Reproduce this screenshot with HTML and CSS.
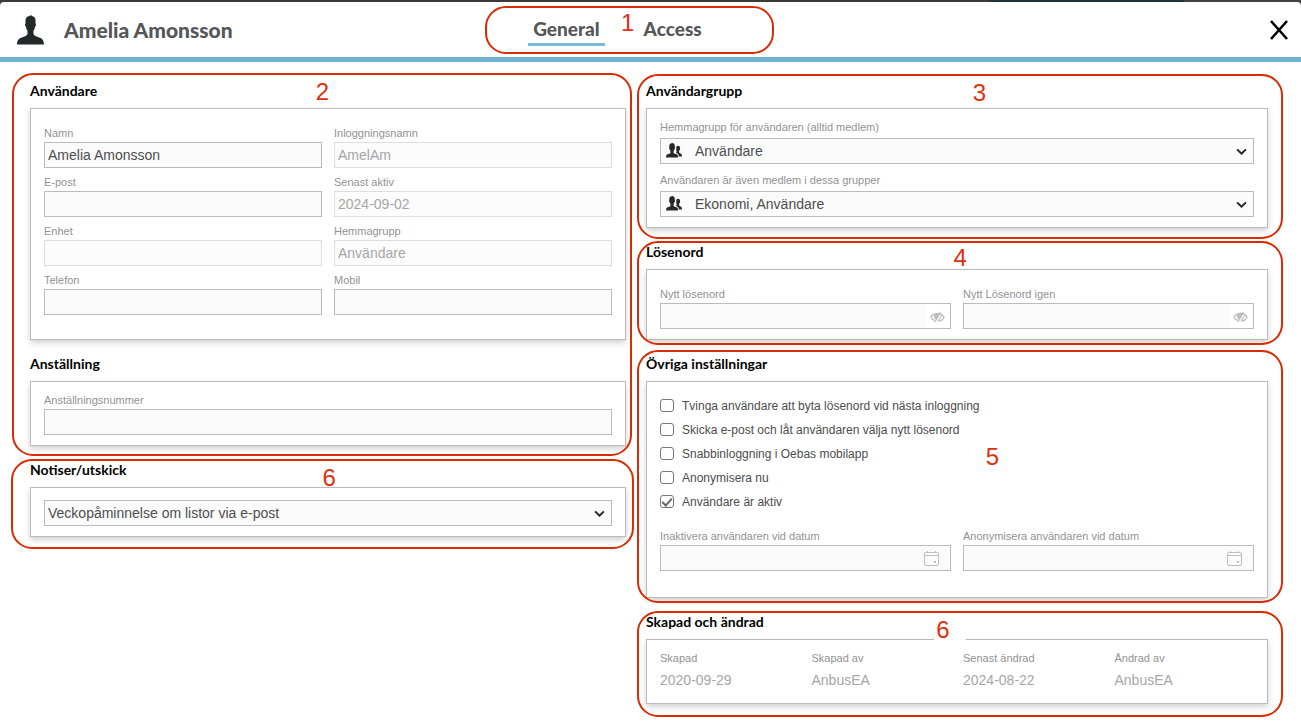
FILE: index.html
```html
<!DOCTYPE html>
<html lang="sv">
<head>
<meta charset="utf-8">
<meta name="viewport" content="width=device-width, initial-scale=1">
<title>Amelia Amonsson</title>
<link rel="stylesheet" href="styles.css">
</head>
<body>
<svg class="symbols" aria-hidden="true">
  <symbol id="person" viewBox="0 0 27 30">
    <path d="M12.500 1 14 0l1 1c2.600.500 3.900 2.500 3.500 5.500v2.300c.9.300.5 2.500-.5 3-.2 1.800-.7 2.900-1.500 4v3.300c.6 1.700 2.400 2.400 5 3.200 3.500 1 5.200 2.300 5.500 7.200H0c.3-4.900 2-6.200 5.500-7.200 2.600-.8 4.400-1.500 5-3.200v-3.300c-.8-1.100-1.300-2.200-1.500-4-1-.5-1.400-2.700-.5-3V6.500C8.200 3.400 9.500 1.300 12.500 1z"/>
  </symbol>
  <symbol id="people" viewBox="0 0 16 15">
    <path d="M5 .4 6 0c2 0 3 1.300 2.800 3.400v1c.5.200.3 1.300-.3 1.600-.1.800-.4 1.300-.9 1.900v1.500c.2 1 1.100 1.300 2.400 1.700 1.600.5 2.100 1.400 2.100 3.500H0c0-2.100.5-3 2.100-3.500 1.300-.4 2.200-.7 2.400-1.700V7.900c-.5-.6-.8-1.100-.9-1.900-.6-.3-.8-1.400-.3-1.600v-1C3.100 1.800 3.800.7 5 .4z"/>
    <path d="M10.300 4c.3-.8.900-1.200 1.700-1.200 1.600 0 2.200 1 2 2.600.4.200.2 1-.2 1.200-.1.700-.3 1-.7 1.400v1.300c.2.700.7 1 1.500 1.300 1 .3 1.400 1.100 1.400 3h-3.200c-.1-1.800-.6-2.700-2.200-3.300l-.9-.4c.6-.2.900-.5.900-1V8c-.3-.3-.4-.6-.4-1z"/>
  </symbol>
  <symbol id="chevron" viewBox="0 0 10 6">
    <path d="M1 1l4 4 4-4" fill="none" stroke="#222" stroke-width="1.700"/>
  </symbol>
  <symbol id="eye" viewBox="0 0 15 12">
    <path d="M1 6.200C3.500 1.200 11.500 1.200 14 6.200 12.800 8.900 10.500 10 8 10M5 9.600C3.200 9 1.700 7.900 1 6.200" fill="none" stroke="currentColor" stroke-width="1.400"/>
    <path d="M4 4c2-1.500 4.500-1.500 6-1L6.500 9C4.500 8.500 3.500 6 4 4z"/>
    <path d="M10.700.8 5 11.200M11.500 4.500 8.500 9.500" fill="none" stroke="currentColor" stroke-width="1.100"/>
  </symbol>
  <symbol id="calendar" viewBox="0 0 15 15">
    <g fill="none" stroke="currentColor" stroke-width="1"><rect x=".5" y="1.500" width="14" height="13" rx="1.500"/><path d="M1 4.500h13M3.500 0v2M11.500 0v2"/></g>
    <rect x="10" y="10" width="2" height="2"/>
  </symbol>
</svg>

<div class="dialog">
  <header class="header">
    <div class="identity">
      <svg class="identity-icon"><use href="#person"/></svg>
      <h1 class="identity-name">Amelia Amonsson</h1>
    </div>
    <nav class="tabs">
      <button class="tab tab-active" type="button">General</button>
      <button class="tab" type="button">Access</button>
      <div class="mark mark-tabs"><span class="mark-number">1</span></div>
    </nav>
    <button class="close" type="button" aria-label="Stäng">
      <svg class="close-icon" viewBox="0 0 18 20"><path d="M1 1l16 18M17 1L1 19" stroke="#000" stroke-width="2.600"/></svg>
    </button>
  </header>

  <main class="content">
    <div class="column">
      <div class="group">
        <section class="section">
          <h2 class="heading">Användare</h2>
          <div class="card card-user">
            <div class="fields">
              <div class="field"><label class="label" for="namn">Namn</label><input class="input" id="namn" type="text" value="Amelia Amonsson"></div>
              <div class="field"><label class="label" for="login">Inloggningsnamn</label><input class="input" id="login" type="text" value="AmelAm" disabled></div>
              <div class="field"><label class="label" for="epost">E-post</label><input class="input" id="epost" type="text"></div>
              <div class="field"><label class="label" for="aktiv">Senast aktiv</label><input class="input" id="aktiv" type="text" value="2024-09-02" disabled></div>
              <div class="field"><label class="label" for="enhet">Enhet</label><input class="input" id="enhet" type="text" disabled></div>
              <div class="field"><label class="label" for="hemma">Hemmagrupp</label><input class="input" id="hemma" type="text" value="Användare" disabled></div>
              <div class="field"><label class="label" for="telefon">Telefon</label><input class="input" id="telefon" type="text"></div>
              <div class="field"><label class="label" for="mobil">Mobil</label><input class="input" id="mobil" type="text"></div>
            </div>
          </div>
        </section>
        <section class="section">
          <h2 class="heading">Anställning</h2>
          <div class="card">
            <div class="field"><label class="label" for="nummer">Anställningsnummer</label><input class="input" id="nummer" type="text"></div>
          </div>
        </section>
        <div class="mark mark-user"><span class="mark-number">2</span></div>
      </div>

      <div class="group">
        <h2 class="heading" id="notiser">Notiser/utskick</h2>
        <div class="card card-notices">
          <div class="control">
            <select class="input select" aria-labelledby="notiser"><option>Veckopåminnelse om listor via e-post</option></select>
            <svg class="chevron"><use href="#chevron"/></svg>
          </div>
        </div>
        <div class="mark mark-notices"><span class="mark-number">6</span></div>
      </div>
    </div>

    <div class="column">
      <div class="group">
        <h2 class="heading">Användargrupp</h2>
        <div class="card card-groups">
          <div class="field field-select">
            <label class="label" for="hemgrupp">Hemmagrupp för användaren (alltid medlem)</label>
            <div class="control">
              <svg class="people"><use href="#people"/></svg>
              <select class="input select select-icon" id="hemgrupp"><option>Användare</option></select>
              <svg class="chevron"><use href="#chevron"/></svg>
            </div>
          </div>
          <div class="field field-select">
            <label class="label" for="grupper">Användaren är även medlem i dessa grupper</label>
            <div class="control">
              <svg class="people"><use href="#people"/></svg>
              <select class="input select select-icon" id="grupper"><option>Ekonomi, Användare</option></select>
              <svg class="chevron"><use href="#chevron"/></svg>
            </div>
          </div>
        </div>
        <div class="mark mark-groups"><span class="mark-number">3</span></div>
      </div>

      <div class="group">
        <h2 class="heading">Lösenord</h2>
        <div class="card card-password">
          <div class="fields">
            <div class="field"><label class="label" for="losen">Nytt lösenord</label>
              <div class="control"><input class="input" id="losen" type="password"><button class="tool tool-eye" type="button" aria-label="Visa lösenord"><svg class="eye"><use href="#eye"/></svg></button></div></div>
            <div class="field"><label class="label" for="losen2">Nytt Lösenord igen</label>
              <div class="control"><input class="input" id="losen2" type="password"><button class="tool tool-eye" type="button" aria-label="Visa lösenord"><svg class="eye"><use href="#eye"/></svg></button></div></div>
          </div>
        </div>
        <div class="mark mark-password"><span class="mark-number">4</span></div>
      </div>

      <div class="group">
        <h2 class="heading">Övriga inställningar</h2>
        <div class="card card-settings">
          <div class="checks">
            <label class="check"><input class="box" type="checkbox">Tvinga användare att byta lösenord vid nästa inloggning</label>
            <label class="check"><input class="box" type="checkbox">Skicka e-post och låt användaren välja nytt lösenord</label>
            <label class="check"><input class="box" type="checkbox">Snabbinloggning i Oebas mobilapp</label>
            <label class="check"><input class="box" type="checkbox">Anonymisera nu</label>
            <label class="check"><input class="box" type="checkbox" checked>Användare är aktiv</label>
          </div>
          <div class="fields">
            <div class="field"><label class="label" for="inaktivera">Inaktivera användaren vid datum</label>
              <div class="control"><input class="input" id="inaktivera" type="text"><button class="tool" type="button" aria-label="Välj datum"><svg class="calendar"><use href="#calendar"/></svg></button></div></div>
            <div class="field"><label class="label" for="anonymisera">Anonymisera användaren vid datum</label>
              <div class="control"><input class="input" id="anonymisera" type="text"><button class="tool" type="button" aria-label="Välj datum"><svg class="calendar"><use href="#calendar"/></svg></button></div></div>
          </div>
        </div>
        <div class="mark mark-settings"><span class="mark-number">5</span></div>
      </div>

      <div class="group">
        <h2 class="heading">Skapad och ändrad</h2>
        <div class="card card-log">
          <dl class="log">
            <div><dt class="label">Skapad</dt><dd class="value">2020-09-29</dd></div>
            <div><dt class="label">Skapad av</dt><dd class="value">AnbusEA</dd></div>
            <div><dt class="label">Senast ändrad</dt><dd class="value">2024-08-22</dd></div>
            <div><dt class="label">Ändrad av</dt><dd class="value">AnbusEA</dd></div>
          </dl>
        </div>
        <div class="mark mark-log"><span class="mark-number">6</span></div>
      </div>
    </div>
  </main>
</div>
</body>
</html>
```
FILE: styles.css
```css
* {
  box-sizing: border-box;
}

body {
  margin: 0;
  padding-top: 2px;
  background: linear-gradient(90deg, #3d3939 0 76%, #20323a 76% 91%, #444141 91%) top / 100% 8px no-repeat #fff;
  font-family: "Liberation Sans", Arial, sans-serif;
  color: #4d4d4d;
}

.symbols {
  display: none;
}

.dialog {
  background: #fff;
  border-radius: 4px 4px 0 0;
}

/* Header */
.header {
  display: grid;
  grid-template-columns: 468fr auto 514fr;
  align-items: center;
  height: 60px;
  padding: 0 13px 0 17px;
  border-bottom: 5px solid #6fb1d0;
}

.identity {
  display: flex;
  align-items: center;
  gap: 20px;
}

.identity-icon {
  width: 27px;
  height: 30px;
  fill: #23282b;
}

.identity-name {
  margin: 0;
  font: 900 21px/28px Lato, sans-serif;
  color: #555658;
}

.tabs {
  position: relative;
  display: flex;
  gap: 34px;
  padding: 4px 67px 0 43px;
}

.tab {
  padding: 0 5px 2px;
  border: 0;
  border-bottom: 3px solid transparent;
  background: none;
  font: 900 19px/24px Lato, sans-serif;
  color: #555658;
}

.tab-active {
  border-color: #7abbd9;
}

.close {
  justify-self: end;
  display: flex;
  padding: 0;
  border: 0;
  background: none;
}

.close-icon {
  width: 18px;
  height: 20px;
}

/* Content */
.content {
  display: grid;
  grid-template-columns: 596fr 622fr;
  align-items: start;
  gap: 20px;
  padding: 18px 33px 18px 30px;
}

.column {
  display: grid;
  gap: 13px;
}

.group {
  position: relative;
}

.section + .section {
  margin-top: 13px;
}

.heading {
  margin: 0 0 6px;
  font: 700 14px/22px Lato, sans-serif;
  color: #000;
}

.card {
  padding: 10px 13px;
  border: 1px solid #bbb;
  background: #fff;
  box-shadow: 0 3px 6px rgba(0, 0, 0, 0.18);
}

.card-user {
  padding-top: 16px;
  padding-bottom: 24px;
}

.card-notices {
  padding-top: 12px;
}

.card-groups {
  display: grid;
  gap: 8px;
}

.card-password {
  padding-top: 16px;
}

.card-settings {
  padding-top: 12px;
  padding-bottom: 26px;
}

.fields {
  display: grid;
  grid-template-columns: 1fr 1fr;
  gap: 6px 12px;
}

.field {
  display: grid;
  gap: 1px;
}

.field-select {
  gap: 3px;
}

.label {
  font: 11px/16px "Liberation Sans", Arial, sans-serif;
  color: #929292;
}

.control {
  position: relative;
  display: grid;
}

.input {
  width: 100%;
  height: 26px;
  padding: 0 3px;
  border: 1px solid #bbb;
  border-radius: 0;
  background: #fbfbfb;
  font: 14px "Liberation Sans", Arial, sans-serif;
  color: #4d4d4d;
}

.input:disabled {
  border-color: #ddd;
  background: #fcfcfc;
  color: #a6a6a6;
}

.select {
  appearance: none;
}

.select-icon {
  padding-left: 34px;
}

.people {
  position: absolute;
  top: 5px;
  left: 6px;
  width: 16px;
  height: 15px;
  fill: #26292b;
}

.chevron {
  position: absolute;
  top: 10px;
  right: 7px;
  width: 11px;
  height: 7px;
  pointer-events: none;
}

.tool {
  position: absolute;
  top: 1px;
  right: 1px;
  display: grid;
  place-items: center;
  width: 38px;
  height: 24px;
  padding: 0;
  border: 0;
  background: none;
  color: #bdbdbd;
  fill: currentColor;
}

.tool-eye {
  width: 24px;
  padding: 2px 2px 0 0;
  background: #fff;
}

.eye {
  width: 15px;
  height: 12px;
}

.calendar {
  width: 15px;
  height: 15px;
}

.checks {
  display: grid;
  justify-items: start;
  margin-bottom: 14px;
}

.check {
  display: flex;
  align-items: center;
  gap: 8px;
  font-size: 12px;
  line-height: 24px;
}

.box {
  appearance: none;
  display: grid;
  place-items: center;
  width: 14px;
  height: 13px;
  margin: 0 0 1px;
  border: 1px solid #777;
  border-radius: 3px;
  background: #fff;
}

.box:checked::before {
  content: "";
  width: 8px;
  height: 4px;
  margin-bottom: 2px;
  border: solid #666;
  border-width: 0 0 2px 2px;
  transform: rotate(-48deg);
}

.log {
  display: grid;
  grid-template-columns: repeat(4, 1fr);
  gap: 12px;
  margin: 0;
}

.value {
  margin: 4px 0 3px;
  font-size: 14px;
  line-height: 20px;
  color: #a6a6a6;
}

/* Numbered outlines drawn over each area */
.mark {
  position: absolute;
  inset: 0 -15px 0 -9px;
  border: 2px solid #d92b04;
  border-radius: 21px;
  pointer-events: none;
}

.mark-number {
  position: absolute;
  top: 3px;
  left: 50%;
  font-size: 24px;
  line-height: 28px;
  color: #e03010;
}

.mark-tabs {
  inset: -7px 0 -8px;
}

.mark-tabs .mark-number {
  top: 1px;
  left: 47%;
}

.mark-user {
  inset: -7px -6px -10px -18px;
}

.mark-user .mark-number {
  left: 49%;
}

.mark-notices {
  inset: 0 -8px -12px -19px;
}

.mark-groups {
  top: -6px;
  bottom: -11px;
}

.mark-groups .mark-number {
  left: 52%;
}

.mark-password {
  bottom: -5px;
}

.mark-password .mark-number {
  top: 1px;
  left: 49%;
}

.mark-settings {
  top: -3px;
  bottom: -5px;
}

.mark-settings .mark-number {
  top: 91px;
  left: 54%;
}

.mark-log {
  bottom: -13px;
}

.mark-log .mark-number {
  left: 46%;
  width: 32px;
  padding-left: 2px;
  background: #fff;
}
```
